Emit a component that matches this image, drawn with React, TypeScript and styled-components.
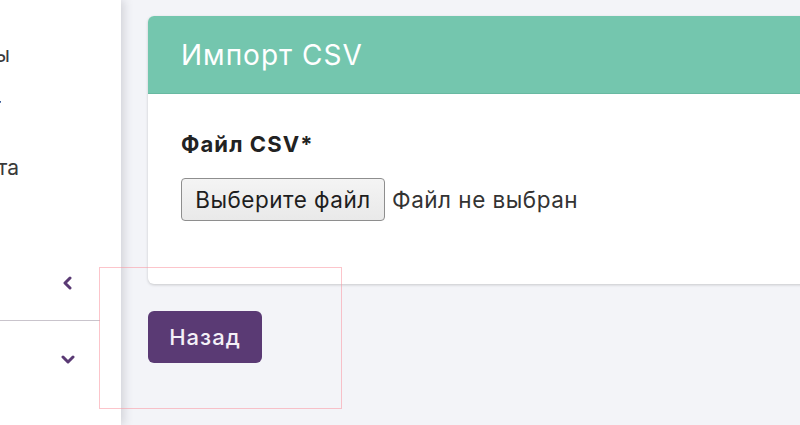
import React from "react";
import styled, { createGlobalStyle } from "styled-components";

const Global = createGlobalStyle`
  html, body { margin: 0; padding: 0; }
  body {
    font-family: Inter, "Liberation Sans", Arial, sans-serif;
    background: #f3f4f8;
    overflow: hidden;
  }
`;

const Page = styled.div`
  position: relative;
  display: flex;
  width: 800px;
  height: 425px;
  overflow: hidden;
  background: #f3f4f8;
`;

const Sidebar = styled.aside`
  position: relative;
  z-index: 1;
  flex: 0 0 121px;
  background: #ffffff;
  box-shadow: 3px 0 9px rgba(60, 60, 80, 0.18);
  display: flex;
  flex-direction: column;
  padding-top: 40px;
`;

const NavItem = styled.div<{ $end: number; $gap: number }>`
  width: ${(p) => p.$end}px;
  margin-top: ${(p) => p.$gap}px;
  height: 24px;
  display: flex;
  justify-content: flex-end;
  overflow: hidden;
  white-space: nowrap;
  font-size: 21px;
  line-height: 24px;
  color: #3a3a3a;
`;

const Toggle = styled.div<{ $gap: number }>`
  display: flex;
  justify-content: flex-end;
  padding-right: 46px;
  margin-top: ${(p) => p.$gap}px;
  height: 16px;
  align-items: center;
`;

const Divider = styled.div`
  width: 100px;
  height: 1px;
  background: #c9c4cc;
  margin-top: 29px;
`;

const Main = styled.main`
  flex: 1 1 auto;
  padding: 16px 0 0 27px;
  display: flex;
  flex-direction: column;
  align-items: flex-start;
`;

const Card = styled.section`
  width: 720px;
  background: #ffffff;
  border-radius: 6px;
  box-shadow: 0 1px 3px rgba(0, 0, 0, 0.18);
  overflow: hidden;
`;

const CardHeader = styled.header`
  height: 77px;
  background: #74c6ae;
  border-bottom: 1px solid #68b9a1;
  display: flex;
  align-items: center;
  padding-left: 33px;
  color: #ffffff;
  font-size: 28px;
  letter-spacing: 1px;
`;

const CardBody = styled.div`
  padding: 37px 33px 63px;
  display: flex;
  flex-direction: column;
  gap: 20px;
`;

const Label = styled.label`
  font-weight: 700;
  font-size: 22px;
  line-height: 27px;
  letter-spacing: 1.1px;
  color: #222;
`;

const FileRow = styled.div`
  display: flex;
  align-items: center;
  gap: 7px;
`;

const FileButton = styled.button`
  height: 43px;
  width: 204px;
  padding: 0;
  border: 1px solid #8e8e8e;
  border-radius: 4px;
  background: linear-gradient(#f4f4f4, #e9e9e9);
  font-family: Inter, "Liberation Sans", Arial, sans-serif;
  font-size: 22.5px;
  letter-spacing: 0.5px;
  color: #1e1e1e;
`;

const FileStatus = styled.span`
  font-size: 22.5px;
  letter-spacing: 0.5px;
  color: #333;
`;

const BackButton = styled.button`
  margin-top: 27px;
  width: 114px;
  height: 52px;
  border: none;
  border-radius: 6px;
  background: #5a3a74;
  color: #f4f0f7;
  font-family: Inter, "Liberation Sans", Arial, sans-serif;
  font-size: 22px;
  font-weight: 500;
  letter-spacing: 1px;
`;

const DebugOutline = styled.div`
  position: absolute;
  left: 99px;
  top: 267px;
  width: 241px;
  height: 140px;
  border: 1px solid rgba(250, 150, 160, 0.55);
  pointer-events: none;
  z-index: 5;
`;

const Chevron = ({ dir }: { dir: "left" | "down" }) => (
  <svg width="14" height="14" viewBox="0 0 14 14">
    <polyline
      points={dir === "left" ? "9,2 4,7 9,12" : "2,5 7,10 12,5"}
      fill="none"
      stroke="#5a3a74"
      strokeWidth="3"
      strokeLinecap="round"
      strokeLinejoin="round"
    />
  </svg>
);

export default function App() {
  return (
    <>
      <Global />
      <Page>
        <Sidebar>
          <NavItem $end={10} $gap={3}>Товары</NavItem>
          <NavItem $end={1} $gap={27}>Отчёт</NavItem>
          <NavItem $end={19} $gap={38}>Оплата</NavItem>
          <Toggle $gap={95}>
            <Chevron dir="left" />
          </Toggle>
          <Divider />
          <Toggle $gap={30}>
            <Chevron dir="down" />
          </Toggle>
        </Sidebar>
        <Main>
          <Card>
            <CardHeader>Импорт CSV</CardHeader>
            <CardBody>
              <Label>Файл CSV*</Label>
              <FileRow>
                <FileButton type="button">Выберите файл</FileButton>
                <FileStatus>Файл не выбран</FileStatus>
              </FileRow>
            </CardBody>
          </Card>
          <BackButton type="button">Назад</BackButton>
        </Main>
        <DebugOutline />
      </Page>
    </>
  );
}
